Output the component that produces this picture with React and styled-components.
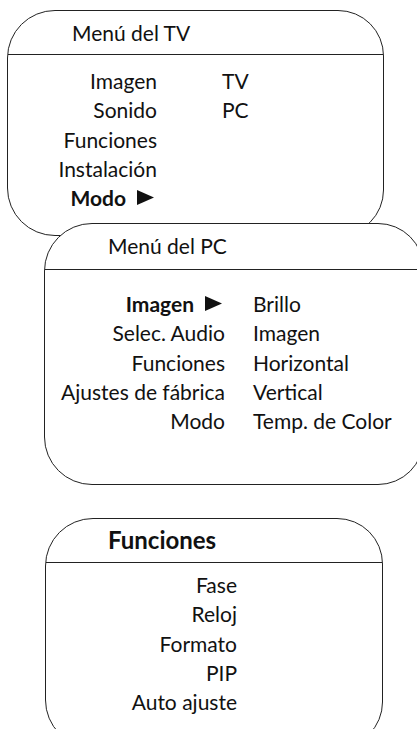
import React from 'react';
import styled, { createGlobalStyle } from 'styled-components';

const GlobalStyle = createGlobalStyle`
    html, body {
        margin: 0;
        padding: 0;
        background: #fff;
        overflow: hidden;
    }
    body {
        font-family: Lato, "Open Sans", sans-serif;
        color: #111;
    }
`;

const Page = styled.div`
    width: 417px;
    height: 729px;
    padding: 10px 0 0 7px;
    box-sizing: border-box;
    overflow: hidden;
`;

const Panel = styled.div`
    position: relative;
    box-sizing: border-box;
    width: ${(props) => props.width}px;
    height: ${(props) => props.height}px;
    margin-left: ${(props) => props.left || 0}px;
    margin-top: ${(props) => props.top || 0}px;
    border: 1.5px solid #222;
    border-radius: 48px 46px 46px 48px;
    background: #fff;
`;

const Header = styled.div`
    box-sizing: border-box;
    height: ${(props) => props.height || 44}px;
    padding-left: ${(props) => props.indent}px;
    padding-bottom: ${(props) => props.lift || 0}px;
    display: flex;
    align-items: center;
    border-bottom: 1.5px solid #222;
    font-size: ${(props) => (props.bold ? 24 : 21)}px;
    font-weight: ${(props) => (props.bold ? 700 : 400)};
`;

const Body = styled.div`
    display: grid;
    grid-template-columns: ${(props) => props.leftWidth}px auto;
    column-gap: ${(props) => props.gap || 0}px;
    grid-auto-rows: 29.3px;
    padding-top: ${(props) => props.padTop}px;
    font-size: 21px;
`;

const Left = styled.div`
    display: flex;
    align-items: center;
    justify-content: flex-end;
    gap: 11px;
    white-space: nowrap;
    font-weight: ${(props) => (props.active ? 700 : 400)};

    svg {
        margin-right: 3px;
    }
`;

const Right = styled.div`
    display: flex;
    align-items: center;
    white-space: nowrap;
`;

const Arrow = () => (
    <svg width="17" height="15" viewBox="0 0 17 15">
        <polygon points="0,0 17,7.5 0,15" fill="#111" />
    </svg>
);

const Menu = ({ rows, leftWidth, gap, padTop }) => (
    <Body leftWidth={leftWidth} gap={gap} padTop={padTop}>
        {rows.map((row, i) => (
            <React.Fragment key={i}>
                <Left active={row.active}>
                    {row.label}
                    {row.active && <Arrow />}
                </Left>
                <Right>{row.value || ''}</Right>
            </React.Fragment>
        ))}
    </Body>
);

const tvRows = [
    { label: 'Imagen', value: 'TV' },
    { label: 'Sonido', value: 'PC' },
    { label: 'Funciones' },
    { label: 'Instalación' },
    { label: 'Modo', active: true },
];

const pcRows = [
    { label: 'Imagen', value: 'Brillo', active: true },
    { label: 'Selec. Audio', value: 'Imagen' },
    { label: 'Funciones', value: 'Horizontal' },
    { label: 'Ajustes de fábrica', value: 'Vertical' },
    { label: 'Modo', value: 'Temp. de Color' },
];

const funcRows = [
    { label: 'Fase' },
    { label: 'Reloj' },
    { label: 'Formato' },
    { label: 'PIP' },
    { label: 'Auto ajuste' },
];

const App = () => {
    return (
        <Page>
            <GlobalStyle />
            <Panel width={377} height={226}>
                <Header indent={64}>Menú del TV</Header>
                <Menu rows={tvRows} leftWidth={149} gap={65} padTop={11} />
            </Panel>
            <Panel width={380} height={262} left={37} top={-13}>
                <Header indent={63} height={46} lift={3}>Menú del PC</Header>
                <Menu rows={pcRows} leftWidth={180} gap={28} padTop={19} />
            </Panel>
            <Panel width={338} height={230} left={38} top={33}>
                <Header indent={62} bold lift={3}>Funciones</Header>
                <Menu rows={funcRows} leftWidth={191} gap={0} padTop={7} />
            </Panel>
        </Page>
    );
};

export default App;
